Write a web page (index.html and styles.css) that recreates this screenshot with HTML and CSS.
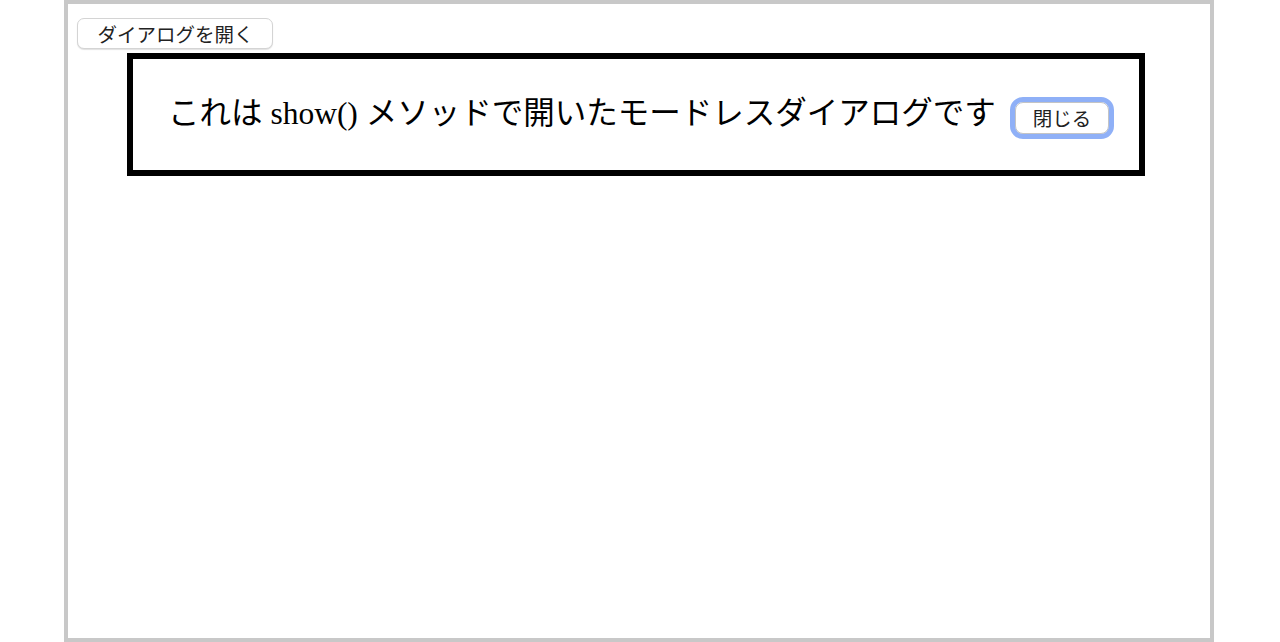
FILE: index.html
```html
<!DOCTYPE html>
<html lang="ja">
<head>
<meta charset="utf-8">
<title>dialog show()</title>
<link rel="stylesheet" href="styles.css">
</head>
<body>
<div class="frame">
  <button class="btn open-btn" type="button">ダイアログを開く</button>
  <div class="dialog">
    <span class="dialog-text">これは show() メソッドで開いたモードレスダイアログです</span>
    <button class="btn close-btn" type="button">閉じる</button>
  </div>
</div>
</body>
</html>
```

FILE: styles.css
```css
html, body {
  margin: 0;
  padding: 0;
  background: #ffffff;
}

.frame {
  box-sizing: border-box;
  width: 1150px;
  height: 642px;
  margin-left: 64px;
  border: 4px solid #c8c8c8;
  padding: 14px 9px;
  display: flex;
  flex-direction: column;
  align-items: flex-start;
}

.btn {
  font-family: "Noto Sans CJK JP", "Noto Sans", sans-serif;
  font-size: 19.5px;
  line-height: 23px;
  color: #222222;
  background: #ffffff;
  border: 1px solid #d4d4d4;
  border-radius: 7px;
  box-shadow: 0 1px 1px rgba(0, 0, 0, 0.12);
  cursor: pointer;
}

.open-btn {
  width: 196px;
  height: 31px;
  padding: 0 0 0 1px;
}

.dialog {
  box-sizing: border-box;
  width: 1018px;
  height: 123px;
  margin-top: 4px;
  margin-left: 50px;
  border: 6px solid #000000;
  background: #ffffff;
  padding: 0 26px 0 35px;
  display: flex;
  align-items: center;
  justify-content: space-between;
}

.dialog-text {
  font-family: "Liberation Serif", "Noto Sans CJK JP", serif;
  font-size: 31.5px;
  color: #000000;
  white-space: nowrap;
  margin-top: -9px;
}

.close-btn {
  width: 94px;
  height: 32px;
  padding: 0;
  margin-top: 6px;
  margin-right: 4px;
  border-radius: 8px;
  outline: 5px solid #8fb0f7;
  outline-offset: 0;
  border-color: #c4c4c4;
}
```
